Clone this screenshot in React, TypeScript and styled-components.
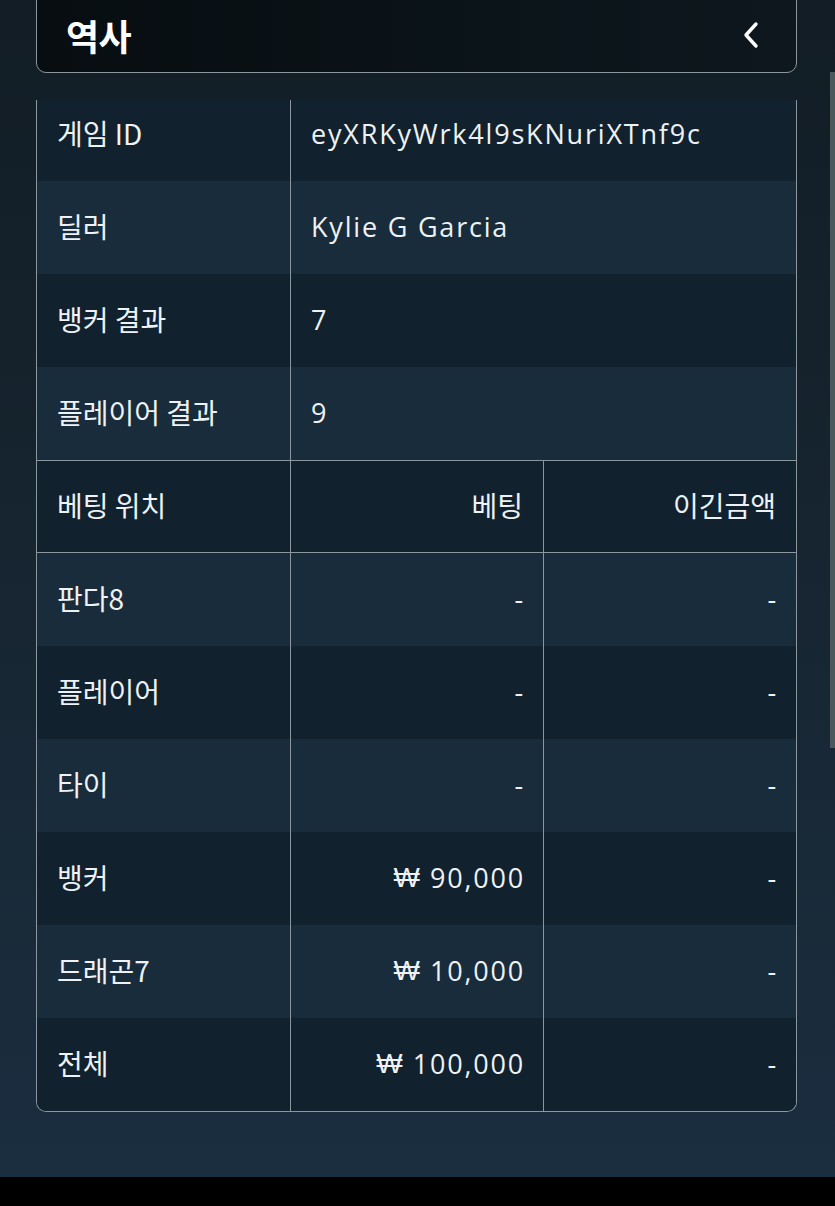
import React from 'react';
import styled, { createGlobalStyle } from 'styled-components';

const GlobalStyle = createGlobalStyle`
  html, body {
    margin: 0;
    padding: 0;
    background: #000;
  }
  #root {
    width: 835px;
    height: 1206px;
    overflow: hidden;
  }
`;

const summary = [
  { label: '게임 ID', value: 'eyXRKyWrk4l9sKNuriXTnf9c' },
  { label: '딜러', value: 'Kylie G Garcia' },
  { label: '뱅커 결과', value: '7' },
  { label: '플레이어 결과', value: '9' },
];

const bets = [
  { label: '판다8', bet: 0, win: 0 },
  { label: '플레이어', bet: 0, win: 0 },
  { label: '타이', bet: 0, win: 0 },
  { label: '뱅커', bet: 90000, win: 0 },
  { label: '드래곤7', bet: 10000, win: 0 },
  { label: '전체', bet: 100000, win: 0 },
];

// amounts of 0 show as a dash
const Amount = ({ value }: { value: number }) => {
  if (!value) return <>-</>;
  return (
    <>
      <Won>₩</Won>
      {value.toLocaleString('en-US')}
    </>
  );
};

const HistoryPage = () => {
  return (
    <Screen>
      <GlobalStyle />
      <Content>
        <Header>
          <Title>역사</Title>
          <BackButton aria-label="back">
            <svg width="22" height="28" viewBox="0 0 22 28" fill="none">
              <path d="M16 3 L6 14 L16 25" stroke="#fff" strokeWidth="3.4" strokeLinecap="round" strokeLinejoin="round" />
            </svg>
          </BackButton>
        </Header>

        <ScrollArea>
          <Table>
            {summary.map((row, i) => (
              <Row key={row.label} $alt={i % 2 === 1} $cols={2}>
                <Label>{row.label}</Label>
                <Value>{row.value}</Value>
              </Row>
            ))}
            <Row $cols={3} $topLine $bottomLine>
              <Label>베팅 위치</Label>
              <Value $right $korean>베팅</Value>
              <Value $right $korean>이긴금액</Value>
            </Row>
            {bets.map((row, i) => (
              <Row key={row.label} $alt={i % 2 === 0} $cols={3}>
                <Label>{row.label}</Label>
                <Value $right><Amount value={row.bet} /></Value>
                <Value $right><Amount value={row.win} /></Value>
              </Row>
            ))}
          </Table>
        </ScrollArea>
      </Content>
      <ScrollThumb />
      <NavBar />
    </Screen>
  );
};

const Screen = styled.div`
  position: relative;
  width: 835px;
  height: 1206px;
  display: flex;
  flex-direction: column;
  background: linear-gradient(180deg, #121d25 0%, #16242f 40%, #1b2e40 100%);
  font-family: 'Noto Sans CJK KR', 'Noto Sans', sans-serif;
  color: #f2f5f7;
  overflow: hidden;
`;

const Content = styled.div`
  flex: 1;
  display: flex;
  flex-direction: column;
  padding: 0 38px 0 36px;
  margin-top: -10px;
`;

const Header = styled.div`
  height: 83px;
  box-sizing: border-box;
  display: flex;
  align-items: center;
  justify-content: space-between;
  padding: 6px 34px 0 29px;
  border: 1px solid #8c979d;
  border-radius: 10px;
  background: linear-gradient(90deg, #070d11 0%, #0b1419 60%, #0d171d 100%);
`;

const Title = styled.h1`
  margin: 0;
  font-size: 36px;
  font-weight: 700;
  color: #ffffff;
  letter-spacing: -0.5px;
`;

const BackButton = styled.button`
  border: none;
  background: transparent;
  padding: 0;
  display: flex;
  align-items: center;
  cursor: pointer;
`;

const ScrollArea = styled.div`
  margin-top: 27px;
  overflow: hidden;
`;

const Table = styled.div`
  margin-top: -12px;
  border-left: 1px solid #8c979d;
  border-right: 1px solid #8c979d;
  border-bottom: 1px solid #8c979d;
  border-radius: 0 0 10px 10px;
  overflow: hidden;
`;

const Row = styled.div<{ $alt?: boolean; $cols: number; $topLine?: boolean; $bottomLine?: boolean }>`
  display: grid;
  grid-template-columns: ${({ $cols }) => ($cols === 2 ? '253px 1fr' : '253px 253px 1fr')};
  height: 93px;
  background: ${({ $alt }) => ($alt ? '#182c3b' : '#11212e')};
  border-top: ${({ $topLine }) => ($topLine ? '1px solid #8c979d' : 'none')};
  border-bottom: ${({ $bottomLine }) => ($bottomLine ? '1px solid #8c979d' : 'none')};
  box-sizing: border-box;
`;

const Label = styled.div`
  display: flex;
  align-items: center;
  padding: 0 20px 3px;
  font-family: 'Noto Sans CJK KR', 'Noto Sans', sans-serif;
  font-size: 28px;
  font-weight: 400;
  color: #eef2f4;
  white-space: nowrap;
`;

const Value = styled.div<{ $right?: boolean; $korean?: boolean }>`
  display: flex;
  align-items: center;
  justify-content: ${({ $right }) => ($right ? 'flex-end' : 'flex-start')};
  padding: 0 ${({ $right, $korean }) => ($right && !$korean ? '18px' : '20px')} 3px 20px;
  border-left: 1px solid #8c979d;
  font-family: ${({ $korean }) =>
    $korean ? "'Noto Sans CJK KR', 'Noto Sans', sans-serif" : "'Open Sans', 'Noto Sans CJK KR', sans-serif"};
  font-size: ${({ $korean }) => ($korean ? '28px' : '27px')};
  letter-spacing: ${({ $korean }) => ($korean ? '0' : '1.8px')};
  font-weight: 400;
  color: #eef2f4;
  white-space: nowrap;
`;

const Won = styled.span`
  font-family: 'DejaVu Sans', sans-serif;
  font-weight: 300;
  font-size: 28px;
  letter-spacing: 0;
  margin-right: 10px;
`;

const ScrollThumb = styled.div`
  position: absolute;
  right: 0;
  top: 72px;
  width: 5px;
  height: 676px;
  background: #4b585c;
`;

const NavBar = styled.div`
  height: 29px;
  background: #000;
`;

export default HistoryPage;
